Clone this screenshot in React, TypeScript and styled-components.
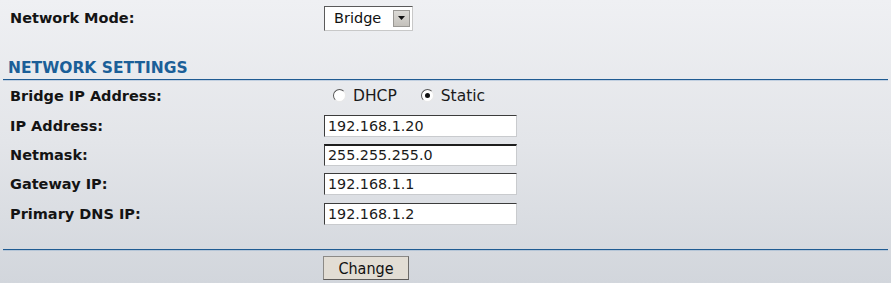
import React from "react";
import styled, { createGlobalStyle } from "styled-components";

const GlobalStyle = createGlobalStyle`
  html, body {
    margin: 0;
    padding: 0;
  }
  body {
    width: 891px;
    height: 283px;
    overflow: hidden;
    background: linear-gradient(to bottom, #eff0f3 0%, #e3e5e9 50%, #d2d6dc 100%);
    font-family: "DejaVu Sans", Verdana, sans-serif;
  }
`;

const Page = styled.div`
  width: 891px;
  height: 283px;
  display: flex;
  flex-direction: column;
`;

const Row = styled.div<{ $h: number }>`
  display: grid;
  grid-template-columns: 314px 1fr;
  align-items: center;
  height: ${(p) => p.$h}px;
  padding-left: 10px;
`;

const Label = styled.div`
  font-size: 14.5px;
  font-weight: bold;
  color: #141414;
`;

const SectionTitle = styled.div`
  margin-top: 23px;
  padding: 0 0 2px 8px;
  font-size: 15.5px;
  font-weight: bold;
  color: #1b5f98;
`;

const Rule = styled.div<{ $top: number }>`
  margin: ${(p) => p.$top}px 3px 0 3px;
  height: 1px;
  background: #1f5b92;
  box-shadow: 0 1px 0 rgba(120, 160, 200, 0.35);
`;

const Select = styled.div`
  width: 89px;
  height: 25px;
  box-sizing: border-box;
  display: flex;
  align-items: center;
  justify-content: space-between;
  padding: 0 2px 0 9px;
  background: #fff;
  border: 1px solid #c8c8c8;
  border-top-color: #5a5a5a;
  border-left-color: #5a5a5a;
  font-size: 14.5px;
  color: #111;
`;

const SelectArrow = styled.div`
  width: 17px;
  height: 17px;
  background: linear-gradient(#dcdad6, #c4c1bb);
  border: 1px solid #9a9894;
  box-sizing: border-box;
  display: flex;
  align-items: center;
  justify-content: center;
`;

const RadioGroup = styled.div`
  display: flex;
  align-items: center;
  gap: 24px;
  padding-left: 9px;
`;

const RadioOption = styled.label`
  display: flex;
  align-items: center;
  gap: 7px;
  font-size: 15.5px;
  color: #1a1a1a;
`;

const RadioDot = styled.span<{ $checked?: boolean }>`
  width: 11px;
  height: 11px;
  border-radius: 50%;
  background: #fff;
  border: 1px solid;
  border-color: #555 #e8e8e8 #e8e8e8 #555;
  position: relative;
  &::after {
    content: "";
    display: ${(p) => (p.$checked ? "block" : "none")};
    position: absolute;
    left: 3px;
    top: 3px;
    width: 5px;
    height: 5px;
    border-radius: 50%;
    background: #111;
  }
`;

const TextInput = styled.div<{ $focus?: boolean }>`
  width: 193px;
  height: 22px;
  box-sizing: border-box;
  background: #fff;
  border: 1px solid #c9cbce;
  border-top: ${(p) => (p.$focus ? "2px solid #1e1e1e" : "1px solid #3c3c3c")};
  border-left-color: #3c3c3c;
  padding-left: 3px;
  display: flex;
  align-items: center;
  font-size: 14.3px;
  color: #1a1a1a;
`;

const Button = styled.button`
  margin-left: 323px;
  margin-top: 6px;
  width: 86px;
  height: 24px;
  background: #e2ddd4;
  border: 1px solid #8c8a86;
  border-bottom-color: #5c5a58;
  border-right-color: #6c6a68;
  font-family: "DejaVu Sans Condensed", "DejaVu Sans", sans-serif;
  font-size: 16px;
  color: #111;
  padding: 0;
`;

const fields = [
  { label: "IP Address:", value: "192.168.1.20" },
  { label: "Netmask:", value: "255.255.255.0", focus: true },
  { label: "Gateway IP:", value: "192.168.1.1" },
  { label: "Primary DNS IP:", value: "192.168.1.2" },
];

const App: React.FC = () => {
  return (
    <>
      <GlobalStyle />
      <Page>
        <Row $h={36}>
          <Label>Network Mode:</Label>
          <Select>
            <span>Bridge</span>
            <SelectArrow>
              <svg width="7" height="4" viewBox="0 0 7 4">
                <path d="M0 0h7L3.5 4z" fill="#111" />
              </svg>
            </SelectArrow>
          </Select>
        </Row>
        <SectionTitle>NETWORK SETTINGS</SectionTitle>
        <Rule $top={0} />
        <Row $h={31}>
          <Label>Bridge IP Address:</Label>
          <RadioGroup>
            <RadioOption>
              <RadioDot />
              DHCP
            </RadioOption>
            <RadioOption>
              <RadioDot $checked />
              Static
            </RadioOption>
          </RadioGroup>
        </Row>
        {fields.map((f) => (
          <Row $h={29.3} key={f.label}>
            <Label>{f.label}</Label>
            <TextInput $focus={f.focus}>{f.value}</TextInput>
          </Row>
        ))}
        <Rule $top={21} />
        <Button>Change</Button>
      </Page>
    </>
  );
};

export default App;
